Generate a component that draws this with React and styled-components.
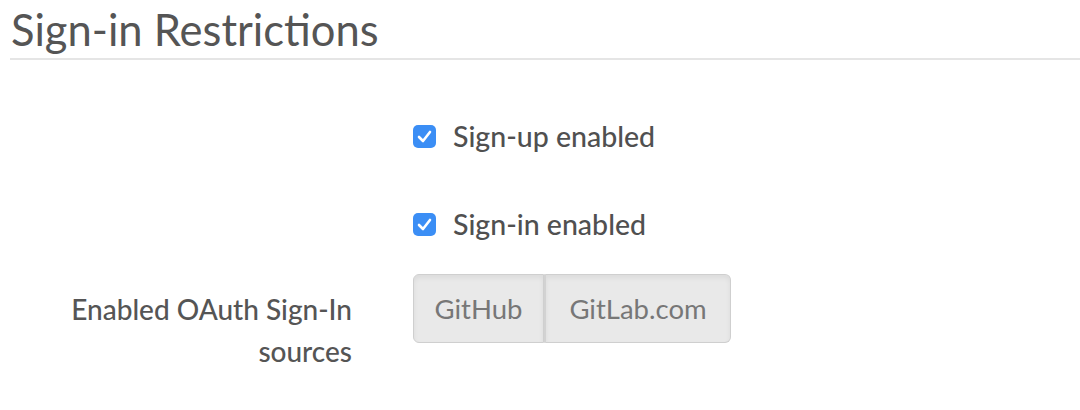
import React from "react";
import styled, { createGlobalStyle } from "styled-components";

const Global = createGlobalStyle`
  html, body { margin: 0; padding: 0; background: #fff; }
  body { font-family: "Lato", "Open Sans", sans-serif; color: #505050; }
`;

const Page = styled.div`
  width: 1080px;
  height: 410px;
  padding-left: 10px;
  box-sizing: border-box;
  overflow: hidden;
`;

const Heading = styled.h3`
  margin: 0;
  padding: 4px 0 0 1px;
  height: 60px;
  box-sizing: border-box;
  font-size: 43.5px;
  font-weight: 400;
  line-height: 50px;
  color: #555;
  border-bottom: 2px solid #e5e5e5;
`;

const Form = styled.form`
  display: flex;
  flex-direction: column;
  padding-top: ${p => p.$top}px;
`;

const Group = styled.div`
  display: grid;
  grid-template-columns: 342px 1fr;
  column-gap: 61px;
  align-items: ${p => p.$align || "center"};
  margin-bottom: ${p => p.$mb || 0}px;
  min-height: ${p => p.$h || 0}px;
`;

const Label = styled.label`
  text-align: right;
  font-size: 28px;
  font-weight: 500;
  line-height: 42px;
  color: #555;
  padding-top: ${p => p.$pt || 0}px;
`;

const CheckRow = styled.label`
  display: flex;
  align-items: center;
  gap: 17px;
  font-size: 28.5px;
  font-weight: 500;
  color: #505050;
`;

const Box = styled.span`
  width: 23px;
  height: 23px;
  border-radius: 5px;
  background: #3b8ef5;
  display: inline-flex;
  align-items: center;
  justify-content: center;
  flex: none;
`;

const BtnGroup = styled.div`
  display: inline-flex;
`;

const Btn = styled.button`
  height: 69px;
  width: ${p => p.$w}px;
  box-sizing: border-box;
  font-family: inherit;
  font-size: 27.5px;
  font-weight: 400;
  color: #777;
  background: #e9e9e9;
  border: 1px solid #cfcfcf;
  border-left-width: ${p => (p.$first ? 1 : 0)}px;
  border-radius: ${p => (p.$first ? "6px 0 0 6px" : "0 6px 6px 0")};
  box-shadow: inset 0 3px 5px rgba(0, 0, 0, 0.06);
  padding: 0;
  cursor: pointer;
  ${p => !p.$first && "border-left: 2px solid #d2d2d2;"}
`;

function Check({ children }) {
  return (
    <CheckRow>
      <Box>
        <svg width="15" height="13" viewBox="0 0 15 13">
          <path d="M2 7 L6 11 L13 2" fill="none" stroke="#fff" strokeWidth="2.6" strokeLinecap="round" strokeLinejoin="round" />
        </svg>
      </Box>
      {children}
    </CheckRow>
  );
}

export default function App() {
  return (
    <Page>
      <Global />
      <Heading>Sign-in Restrictions</Heading>
      <Form $top={56}>
        <Group $mb={48} $h={40}>
          <span />
          <Check>Sign-up enabled</Check>
        </Group>
        <Group $mb={30} $h={40}>
          <span />
          <Check>Sign-in enabled</Check>
        </Group>
        <Group $align="start">
          <Label $pt={14}>Enabled OAuth Sign-In sources</Label>
          <BtnGroup>
            <Btn type="button" $first $w={131}>GitHub</Btn>
            <Btn type="button" $w={187}>GitLab.com</Btn>
          </BtnGroup>
        </Group>
      </Form>
    </Page>
  );
}
